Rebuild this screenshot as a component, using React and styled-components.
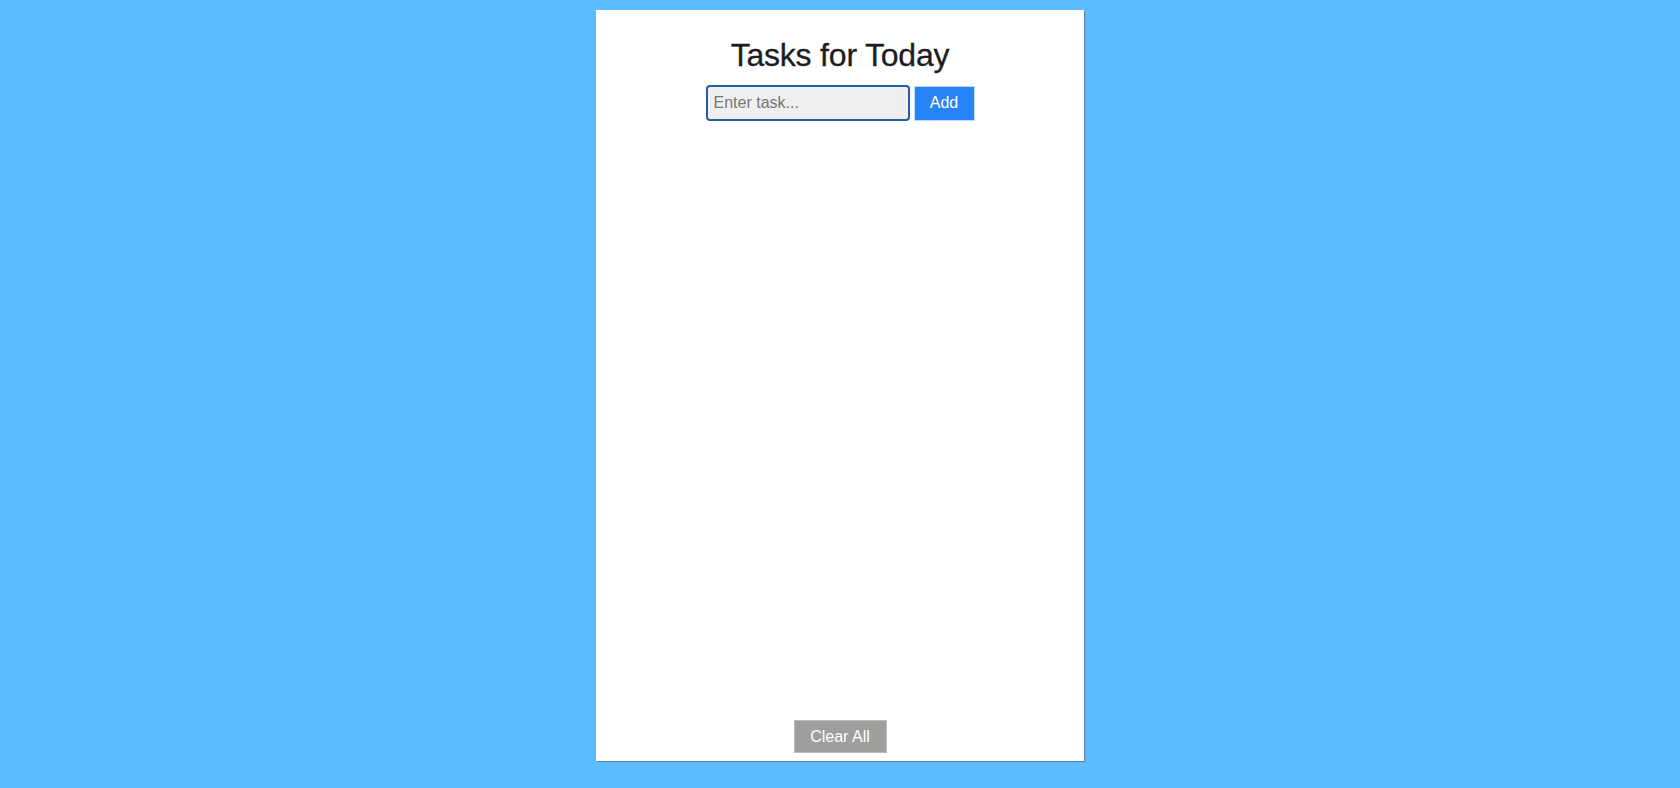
import React, { useState } from "react";
import styled, { createGlobalStyle } from "styled-components";

const GlobalStyle = createGlobalStyle`
  html, body {
    margin: 0;
    padding: 0;
    background: #5bbcff;
    font-family: "Liberation Sans", Arial, sans-serif;
  }
`;

const Page = styled.div`
  min-height: 788px;
  padding-top: 10px;
  box-sizing: border-box;
`;

const Card = styled.div`
  width: 488px;
  height: 751px;
  margin: 0 auto;
  background: #ffffff;
  box-shadow: 1px 1px 1px rgba(90, 90, 90, 0.55);
  display: flex;
  flex-direction: column;
  align-items: center;
  padding: 27px 0 8px;
  box-sizing: border-box;
`;

const Title = styled.h1`
  margin: 0;
  font-size: 32px;
  font-weight: 400;
  letter-spacing: -0.2px;
  color: #1d1d1f;
  line-height: 37px;
  -webkit-text-stroke: 0.3px #1d1d1f;
`;

const InputRow = styled.div`
  display: flex;
  align-items: center;
  gap: 4px;
  margin-top: 11px;
`;

const TaskInput = styled.input`
  width: 204px;
  height: 36px;
  box-sizing: border-box;
  border: 2px solid #245ea6;
  border-radius: 4px;
  background: #efefef;
  padding: 0 6px;
  font-family: "Liberation Sans", Arial, sans-serif;
  font-size: 16px;
  color: #222;
  outline: none;
  &::placeholder {
    color: #777;
  }
`;

const Button = styled.button`
  width: ${(p) => p.$w}px;
  height: ${(p) => p.$h}px;
  padding: 0;
  border: 1px solid ${(p) => p.$border};
  background: ${(p) => p.$bg};
  color: #ffffff;
  font-family: "Liberation Sans", Arial, sans-serif;
  font-size: 16px;
  cursor: pointer;
  box-sizing: border-box;
`;

const TaskList = styled.ul`
  flex: 1;
  list-style: none;
  margin: 0;
  padding: 0;
  width: 100%;
`;

export default function App() {
  const [text, setText] = useState("");
  const [tasks, setTasks] = useState([]);
  return (
    <>
      <GlobalStyle />
      <Page>
        <Card>
          <Title>Tasks for Today</Title>
          <InputRow>
            <TaskInput
              placeholder="Enter task..."
              value={text}
              onChange={(e) => setText(e.target.value)}
            />
            <Button
              $w={61}
              $h={35}
              $bg="#2784f7"
              $border="#b9dcff"
              onClick={() => {
                if (text.trim()) {
                  setTasks([...tasks, text.trim()]);
                  setText("");
                }
              }}
            >
              Add
            </Button>
          </InputRow>
          <TaskList>
            {tasks.map((t, i) => (
              <li key={i}>{t}</li>
            ))}
          </TaskList>
          <Button $w={93} $h={33} $bg="#9e9e9e" $border="#bdbdbd" onClick={() => setTasks([])}>
            Clear All
          </Button>
        </Card>
      </Page>
    </>
  );
}
